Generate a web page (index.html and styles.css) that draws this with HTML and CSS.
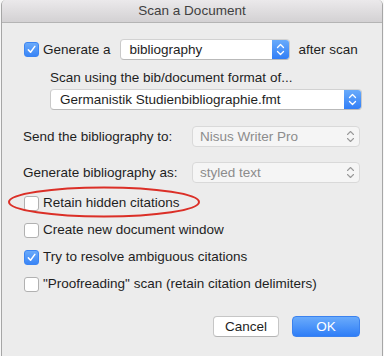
FILE: index.html
```html
<!DOCTYPE html>
<html lang="en">
<head>
  <meta charset="UTF-8">
  <title>Scan a Document</title>
  <link rel="stylesheet" href="styles.css">
</head>
<body>
  <div class="window">
    <div class="titlebar">Scan a Document</div>

    <div class="content">
      <div class="row gen-row">
        <span class="checkbox checked"><svg viewBox="0 0 14 14"><path d="M3.6 7.4 L6 10 L10.6 3.6" /></svg></span>
        <span class="label">Generate a</span>
        <div class="popup popup-main">
          <span class="popup-text">bibliography</span>
          <span class="stepper"><svg viewBox="0 0 17 21"><path d="M5.5 8.5 L8.5 5.5 L11.5 8.5 M5.5 12.5 L8.5 15.5 L11.5 12.5" /></svg></span>
        </div>
        <span class="label after">after scan</span>
      </div>

      <div class="format">
        <div class="format-label">Scan using the bib/document format of...</div>
        <div class="popup popup-format">
          <span class="popup-text">Germanistik Studienbibliographie.fmt</span>
          <span class="stepper"><svg viewBox="0 0 17 21"><path d="M5.5 8.5 L8.5 5.5 L11.5 8.5 M5.5 12.5 L8.5 15.5 L11.5 12.5" /></svg></span>
        </div>
      </div>

      <div class="row field-row">
        <span class="field-label">Send the bibliography to:</span>
        <div class="popup disabled">
          <span class="popup-text">Nisus Writer Pro</span>
          <span class="stepper"><svg viewBox="0 0 17 21"><path d="M5.5 8.5 L8.5 5.5 L11.5 8.5 M5.5 12.5 L8.5 15.5 L11.5 12.5" /></svg></span>
        </div>
      </div>

      <div class="row field-row">
        <span class="field-label">Generate bibliography as:</span>
        <div class="popup disabled">
          <span class="popup-text">styled text</span>
          <span class="stepper"><svg viewBox="0 0 17 21"><path d="M5.5 8.5 L8.5 5.5 L11.5 8.5 M5.5 12.5 L8.5 15.5 L11.5 12.5" /></svg></span>
        </div>
      </div>

      <div class="options">
        <div class="row option highlighted">
          <span class="checkbox"></span>
          <span class="label">Retain hidden citations</span>
          <svg class="circle" viewBox="0 0 196 34"><ellipse cx="97" cy="16" rx="95" ry="14.5" /></svg>
        </div>
        <div class="row option">
          <span class="checkbox"></span>
          <span class="label">Create new document window</span>
        </div>
        <div class="row option">
          <span class="checkbox checked"><svg viewBox="0 0 14 14"><path d="M3.6 7.4 L6 10 L10.6 3.6" /></svg></span>
          <span class="label">Try to resolve ambiguous citations</span>
        </div>
        <div class="row option">
          <span class="checkbox"></span>
          <span class="label">"Proofreading" scan (retain citation delimiters)</span>
        </div>
      </div>

      <div class="buttons">
        <button class="btn">Cancel</button>
        <button class="btn btn-default">OK</button>
      </div>
    </div>
  </div>
</body>
</html>
```

FILE: styles.css
```css
body {
  margin: 0;
  background: #f7f7f7;
  font-family: 'Liberation Sans', Arial, sans-serif;
  font-size: 13.5px;
  color: #1e1e1e;
}
.window {
  margin-left: 1px;
  width: 380px;
  height: 356px;
  background: #ececec;
  border-left: 1px solid #a6a6a6;
  border-right: 1px solid #a6a6a6;
  border-radius: 5px 5px 0 0;
  overflow: hidden;
}
.titlebar {
  height: 22px;
  line-height: 22px;
  text-align: center;
  color: #404040;
  background: linear-gradient(#ebe9eb, #d3d1d3);
  border-bottom: 1px solid #b4b4b4;
}
.content {
  padding: 16px 22px 0 20px;
}
.row {
  display: flex;
  align-items: center;
}
.checkbox {
  width: 13px;
  height: 13px;
  margin-left: 2px;
  margin-right: 4px;
  border: 1px solid #b1b1b1;
  border-radius: 3px;
  background: #fff;
  flex-shrink: 0;
  display: flex;
}
.checkbox.checked {
  border-color: #3c85f2;
  background: linear-gradient(#6aaafa, #3a85f6);
}
.checkbox svg {
  width: 13px;
  height: 13px;
}
.checkbox path {
  fill: none;
  stroke: #fff;
  stroke-width: 1.6;
  stroke-linecap: round;
  stroke-linejoin: round;
}
.label {
  white-space: nowrap;
  line-height: 16px;
}
.popup {
  height: 19px;
  display: flex;
  align-items: center;
  background: #fff;
  border: 1px solid #c9c9c9;
  border-top-color: #d2d2d2;
  border-bottom-color: #b9b9b9;
  border-radius: 4px;
  overflow: hidden;
}
.popup-text {
  flex: 1;
  padding-left: 9px;
  white-space: nowrap;
}
.stepper {
  width: 17px;
  height: 21px;
  display: flex;
  background: linear-gradient(#6badfb, #2f7cf6);
}
.stepper svg {
  width: 17px;
  height: 21px;
}
.stepper path {
  fill: none;
  stroke: #fff;
  stroke-width: 1.3;
  stroke-linecap: round;
  stroke-linejoin: round;
}
.popup-main {
  width: 168px;
  margin-left: 9px;
}
.after {
  margin-left: 9px;
}
.format {
  padding-left: 28px;
}
.format-label {
  margin-top: 10px;
  line-height: 16px;
}
.popup-format {
  margin-top: 3px;
  width: 310px;
}
.field-row {
  margin-top: 16px;
  justify-content: space-between;
}
.field-row + .field-row {
  margin-top: 15px;
}
.field-label {
  white-space: nowrap;
  padding-left: 1px;
}
.popup.disabled {
  width: 166px;
  background: #f5f5f5;
  border-color: #d9d9d9;
  color: #8c8c8c;
}
.popup.disabled .popup-text {
  padding-left: 7px;
}
.popup.disabled .stepper {
  background: none;
}
.popup.disabled .stepper path {
  stroke: #9a9a9a;
  stroke-width: 1.1;
}
.options {
  margin-top: 12px;
  display: flex;
  flex-direction: column;
  gap: 11px;
}
.option {
  height: 16px;
}
.highlighted {
  position: relative;
}
.circle {
  position: absolute;
  left: -15px;
  top: -9px;
  width: 196px;
  height: 34px;
  overflow: visible;
}
.circle ellipse {
  fill: none;
  stroke: #db2f27;
  stroke-width: 2;
}
.buttons {
  margin-top: 24px;
  display: flex;
  justify-content: flex-end;
  gap: 13px;
}
.btn {
  height: 21px;
  width: 66px;
  padding: 0;
  font-family: 'Liberation Sans', Arial, sans-serif;
  font-size: 13.5px;
  color: #1e1e1e;
  background: #fff;
  border: 1px solid #c6c6c6;
  border-bottom-color: #b4b4b4;
  border-radius: 4px;
}
.btn-default {
  width: 68px;
  color: #fff;
  border-color: #3b82ef;
  background: linear-gradient(#6aabfb, #2f7ef7);
}
```
